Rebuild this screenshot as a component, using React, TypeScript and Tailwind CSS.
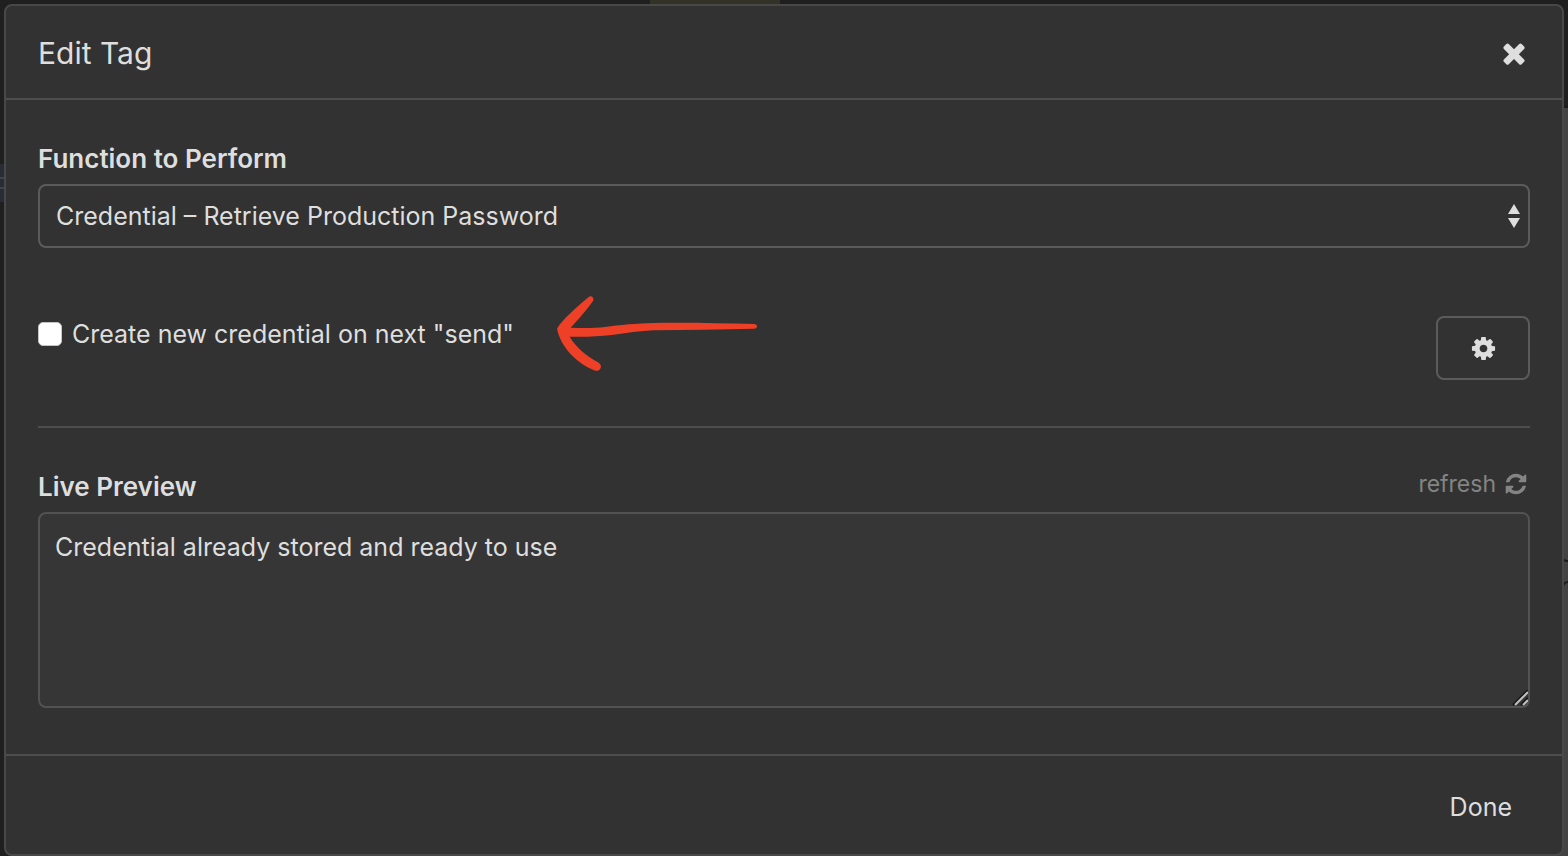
import type { ReactNode } from "react";

const CLOSE_PATH =
  "M1490 1322q0 40-28 68l-136 136q-28 28-68 28t-68-28l-294-294-294 294q-28 28-68 28t-68-28l-136-136q-28-28-28-68t28-68l294-294-294-294q-28-28-28-68t28-68l136-136q28-28 68-28t68 28l294 294 294-294q28-28 68-28t68 28l136 136q28 28 28 68t-28 68l-294 294 294 294q28 28 28 68z";
const COG_PATH =
  "M1152 896q0-106-75-181t-181-75-181 75-75 181 75 181 181 75 181-75 75-181zm512-109v222q0 12-8 23t-20 13l-185 28q-19 54-39 91 35 50 107 138 10 12 10 25t-9 23q-27 37-99 108t-94 71q-12 0-26-9l-138-108q-44 23-91 38-16 136-29 186-7 28-36 28h-222q-14 0-24.500-8.500t-11.500-21.500l-28-184q-49-16-90-37l-141 107q-10 9-25 9-14 0-25-11-126-114-165-168-7-10-7-23 0-12 8-23 15-21 51-66.500t54-70.500q-27-50-41-99l-183-27q-13-2-21-12.500t-8-23.500v-222q0-12 8-23t19-13l186-28q14-46 39-92-40-57-107-138-10-12-10-24 0-10 9-23 26-36 98.500-107.500t94.500-71.500q13 0 26 10l138 107q44-23 91-38 16-136 29-186 7-28 36-28h222q14 0 24.500 8.500t11.500 21.500l28 184q49 16 90 37l142-107q9-9 24-9 13 0 25 10 129 119 165 170 7 8 7 22 0 12-8 23-15 21-51 66.500t-54 70.500q26 50 41 98l183 28q13 2 21 12.500t8 23.500z";
const REFRESH_PATH =
  "M1639 1056q0 5-1 7-64 268-268 434.500t-478 166.500q-146 0-282.500-55t-243.500-157l-129 129q-19 19-45 19t-45-19-19-45v-448q0-26 19-45t45-19h448q26 0 45 19t19 45-19 45l-137 137q71 66 161 102t187 36q134 0 250-65t186-179q11-17 53-117 8-23 30-23h192q13 0 22.500 9.500t9.500 22.500zm25-800v448q0 26-19 45t-45 19h-448q-26 0-45-19t-19-45 19-45l138-138q-148-137-349-137-134 0-250 65t-186 179q-11 17-53 117-8 23-30 23h-199q-13 0-22.500-9.500t-9.500-22.500v-7q65-268 270-434.500t480-166.500q146 0 284 55.500t245 156.500l130-129q19-19 45-19t45 19 19 45z";

function Icon({ path, className }: { path: string; className: string }) {
  return (
    <svg viewBox="0 0 1792 1792" fill="currentColor" className={className} aria-hidden="true">
      <path d={path} />
    </svg>
  );
}

/* The dimmed workspace behind the dialog */
function Backdrop() {
  return (
    <div className="absolute inset-0 -z-10 flex bg-[#1f1f1f]" aria-hidden="true">
      <div className="flex w-1/2 flex-col">
        <div className="ml-auto mr-1 h-16 w-[130px] bg-[#323226]" />
        <div className="mt-[100px] flex h-[38px] w-full flex-col justify-center gap-2 bg-[#282c34]">
          <div className="h-0.5 w-2 bg-[#3f434a]" />
          <div className="h-0.5 w-2 bg-[#3f434a]" />
        </div>
      </div>
      <div className="flex w-1/2 flex-col items-end">
        <div className="h-[108px] w-full border-b-2 border-[#1a1a1a]" />
        <div className="w-1/2 flex-1 bg-[#434343]">
          <svg viewBox="0 0 8 40" fill="none" stroke="#1c1c1c" strokeWidth="2" className="mt-[444px] ml-auto h-10 w-2">
            <path d="M2 5Q3 9 8 9M2 36Q4 30 8 30" />
          </svg>
        </div>
      </div>
    </div>
  );
}

function Arrow() {
  return (
    <svg viewBox="0 0 720 330" className="pointer-events-none absolute -top-9 left-[502px] h-[110px] w-60" aria-hidden="true">
      <path
        fill="#ee4026"
        d="M51 147C54 139 62 130 71 120C90 99 121 72 146 51C154 45 164 54 159 63C141 89 113 121 92 143C125 145 165 145 195 141C238 135 290 130 340 129C440 127 545 130 642 132C654 133 654 145 642 146C545 149 440 149 340 151C300 153 260 159 215 165C175 170 130 171 89 170C108 202 138 227 176 248C190 257 181 275 166 272C112 251 64 205 51 147Z"
      />
    </svg>
  );
}

function FieldLabel({ htmlFor, children }: { htmlFor: string; children: ReactNode }) {
  return (
    <label htmlFor={htmlFor} className="text-[26px] leading-9 font-semibold">
      {children}
    </label>
  );
}

export default function App() {
  return (
    <div className="relative isolate flex min-h-screen flex-col px-1 pt-1 font-[Inter,'Liberation_Sans',sans-serif] text-[#dedede]">
      <Backdrop />
      <div role="dialog" aria-labelledby="dialog-title" className="flex flex-1 flex-col rounded-lg border-2 border-[#484848] bg-[#323232]">
        <header className="flex h-[94px] items-center justify-between border-b-2 border-[#4e4e4e] px-8 pt-0.5">
          <h1 id="dialog-title" className="text-[30px] leading-10">Edit Tag</h1>
          <button type="button" aria-label="Close">
            <Icon path={CLOSE_PATH} className="size-8" />
          </button>
        </header>

        <main className="flex flex-1 flex-col px-8 pt-[41px] pb-[46px]">
          <FieldLabel htmlFor="function">Function to Perform</FieldLabel>
          <div className="relative mt-[7px]">
            <select
              id="function"
              className="block h-16 w-full appearance-none rounded-lg border-2 border-[#5b5b5b] bg-transparent px-4 pt-0.5 text-[25px]"
            >
              <option>Credential – Retrieve Production Password</option>
            </select>
            <svg viewBox="0 0 12 24" fill="currentColor" className="pointer-events-none absolute top-5 right-[10px] h-6 w-3" aria-hidden="true">
              <path d="M6 0L12 10H0ZM0 14H12L6 24Z" />
            </svg>
          </div>

          <div className="relative mt-[68px] flex items-start justify-between">
            <label className="flex h-9 items-center gap-[10px] text-[25px] leading-9">
              <input type="checkbox" className="size-6 appearance-none rounded-[5px] border border-[#c4c4c4] bg-white" />
              Create new credential on next "send"
            </label>
            <Arrow />
            <button
              type="button"
              aria-label="Tag settings"
              className="flex h-16 w-[94px] items-center justify-center rounded-lg border-2 border-[#5b5b5b]"
            >
              <Icon path={COG_PATH} className="size-[27px]" />
            </button>
          </div>

          <hr className="mt-[46px] border-t-2 border-[#4e4e4e]" />

          <div className="mt-[41px] flex justify-between">
            <FieldLabel htmlFor="preview">Live Preview</FieldLabel>
            <button type="button" className="flex h-[30px] items-center gap-2 pr-0.5 text-[23px] leading-7 text-[#848484]">
              refresh
              <Icon path={REFRESH_PATH} className="size-6" />
            </button>
          </div>
          <div className="relative mt-[7px] flex flex-1">
            <textarea
              id="preview"
              readOnly
              className="min-h-[196px] w-full resize-none rounded-lg border-2 border-[#525252] bg-[#363636] px-[15px] py-[15px] text-[25px] leading-9"
              defaultValue="Credential already stored and ready to use"
            />
            <svg viewBox="0 0 16 16" fill="none" className="pointer-events-none absolute right-0.5 bottom-0.5 size-4" aria-hidden="true">
              <path d="M1 15L16 0M9 15L16 8" stroke="#151515" strokeWidth="2" />
              <path d="M3 15L16 2M11 15L16 10" stroke="#c0c0c0" strokeWidth="2" />
            </svg>
          </div>
        </main>

        <footer className="flex h-[100px] items-center justify-end border-t-2 border-[#4e4e4e] px-8 pt-1">
          <button type="button" className="px-[18px] text-[25px] leading-9">Done</button>
        </footer>
      </div>
    </div>
  );
}
